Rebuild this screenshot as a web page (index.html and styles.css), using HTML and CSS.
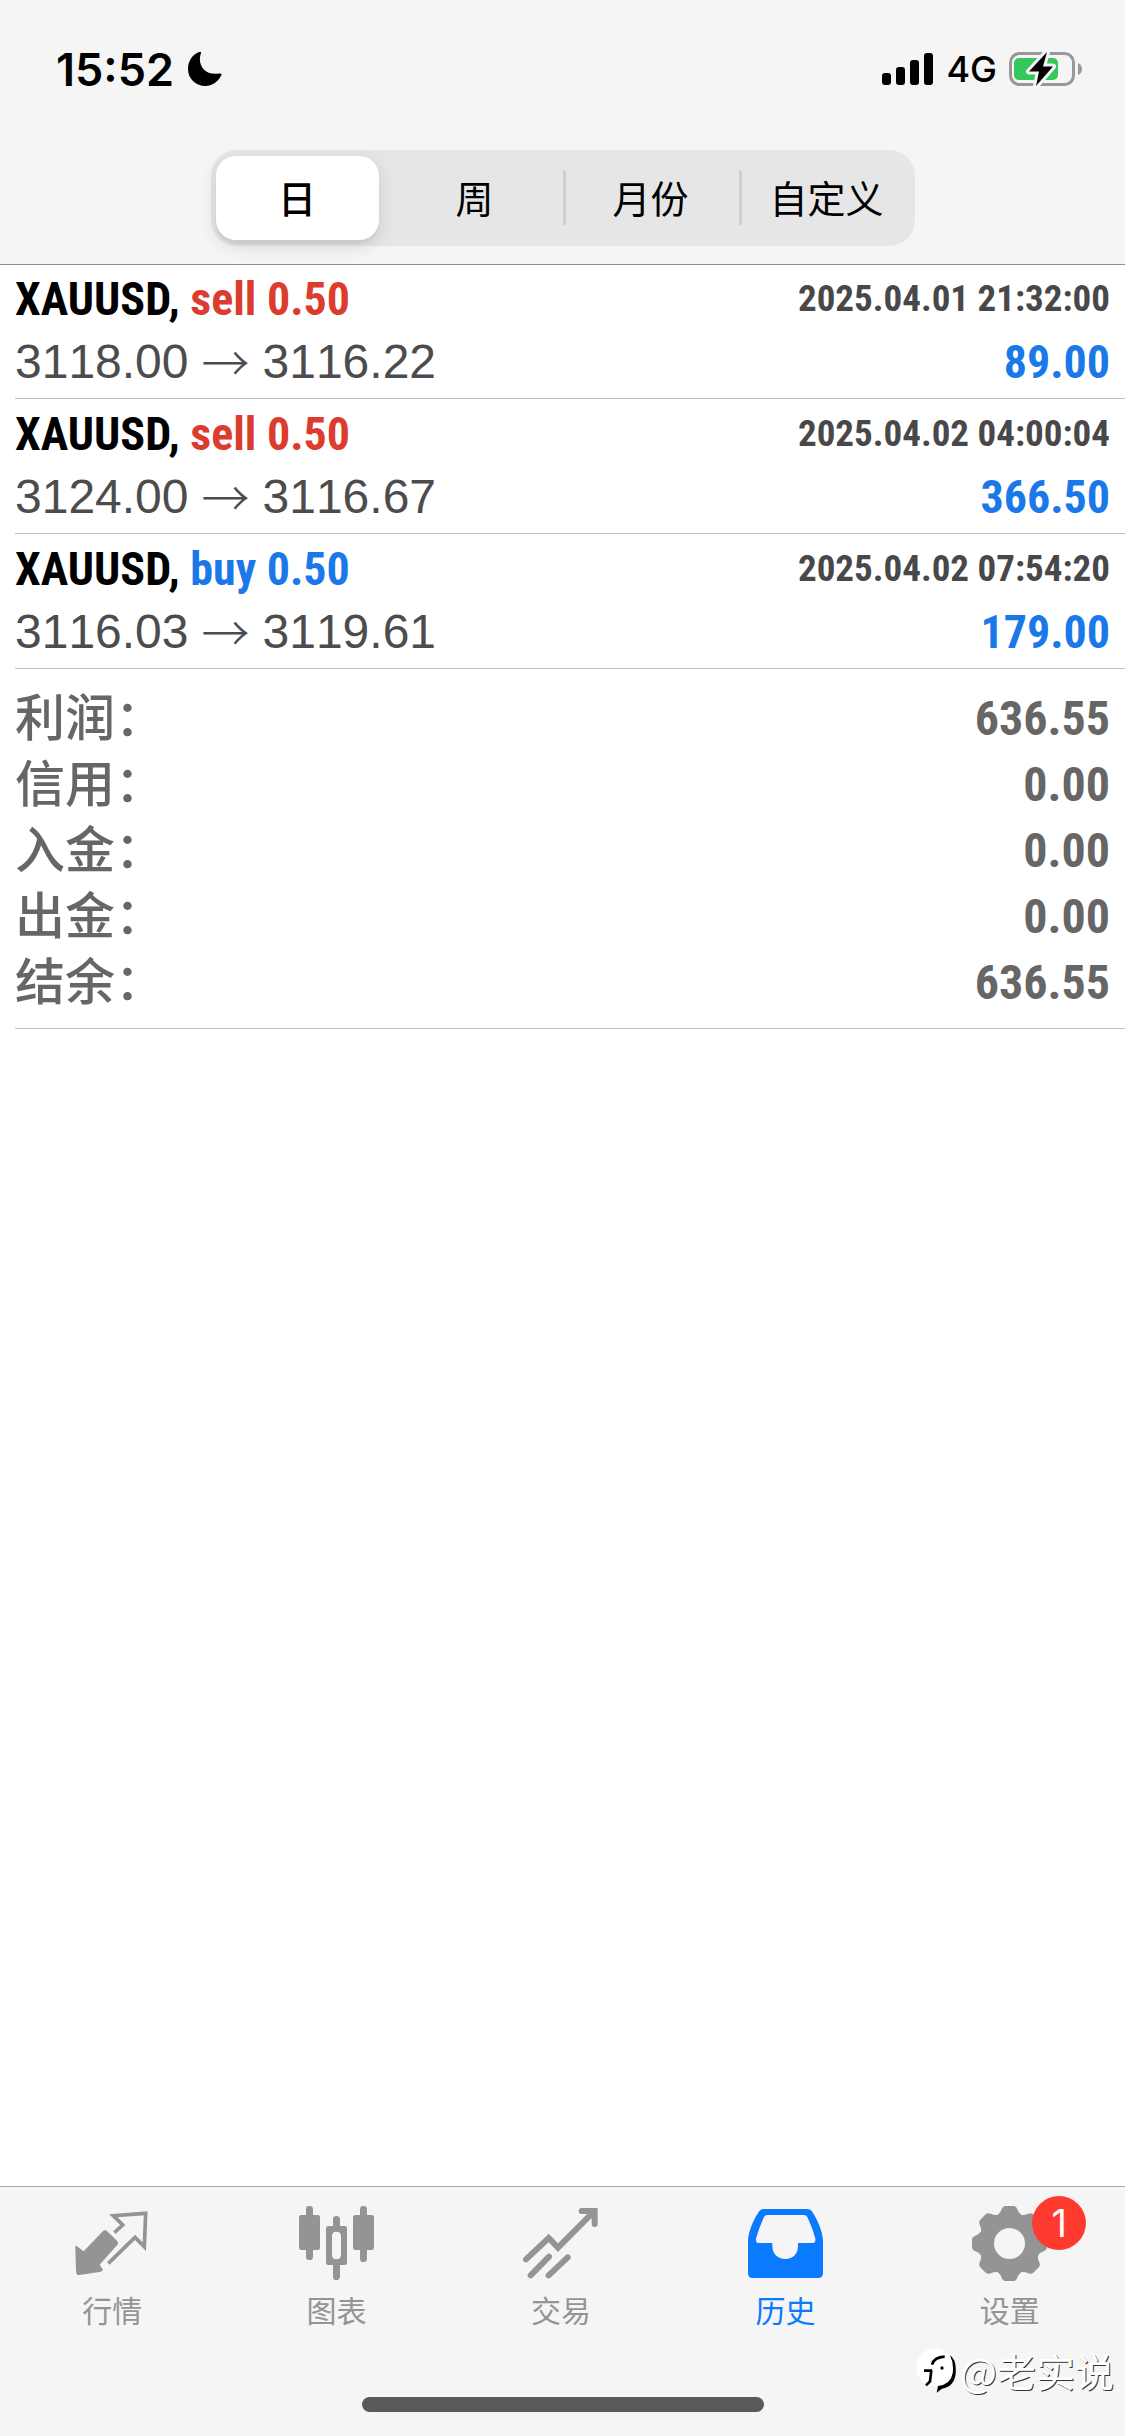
FILE: index.html
```
<!DOCTYPE html>
<html lang="zh-CN">
<head>
<meta charset="utf-8">
<meta name="viewport" content="width=device-width, initial-scale=1">
<title>历史</title>
<link rel="stylesheet" href="styles.css">
</head>
<body>
<header class="header">
  <div class="status">
    <div class="status-left">
      <span class="time">15:52</span>
      <svg class="moon" viewBox="0 0 34 34" aria-hidden="true"><path d="M13 1C9 12 16 24 31 21.500Q34 21 33.500 23C30 30 24 34 17.500 34C8 34 0 27 0 17C0 9 4 3 11 0Q13.500-1 13 1Z"/></svg>
    </div>
    <div class="status-right">
      <svg class="signal" viewBox="0 0 52 32" aria-hidden="true"><rect x="0" y="20" width="9" height="12" rx="3"/><rect x="14" y="14" width="9" height="18" rx="3"/><rect x="28" y="7" width="9" height="25" rx="3"/><rect x="42" y="0" width="9" height="32" rx="3"/></svg>
      <span class="network">4G</span>
      <svg class="battery" viewBox="0 0 74 36" aria-hidden="true">
        <rect x="1.500" y="2.500" width="63" height="31" rx="9" fill="none" stroke="#98989a" stroke-width="3"/>
        <path d="M69 12Q73 14 73 18T69 24Z" fill="#98989a"/>
        <rect x="5" y="7" width="44" height="22" rx="5" fill="#34c759"/>
        <path d="M38 1L20 20.500H30L27 35L44 15.500H34Z" fill="#000" stroke="#f5f5f5" stroke-width="6" stroke-linejoin="round" paint-order="stroke"/>
      </svg>
    </div>
  </div>
  <div class="segments" role="group" aria-label="时间范围">
    <button class="segment segment-active" type="button" aria-pressed="true">日</button>
    <button class="segment" type="button">周</button>
    <button class="segment segment-divided" type="button">月份</button>
    <button class="segment segment-divided" type="button">自定义</button>
  </div>
</header>

<main class="content">
  <ul class="deals">
    <li class="deal">
      <div class="line"><span class="symbol">XAUUSD, <span class="sell">sell 0.50</span></span><time class="date">2025.04.01 21:32:00</time></div>
      <div class="line"><span class="prices">3118.00 <span class="arrow">→</span> 3116.22</span><span class="profit">89.00</span></div>
    </li>
    <li class="deal">
      <div class="line"><span class="symbol">XAUUSD, <span class="sell">sell 0.50</span></span><time class="date">2025.04.02 04:00:04</time></div>
      <div class="line"><span class="prices">3124.00 <span class="arrow">→</span> 3116.67</span><span class="profit">366.50</span></div>
    </li>
    <li class="deal">
      <div class="line"><span class="symbol">XAUUSD, <span class="buy">buy 0.50</span></span><time class="date">2025.04.02 07:54:20</time></div>
      <div class="line"><span class="prices">3116.03 <span class="arrow">→</span> 3119.61</span><span class="profit">179.00</span></div>
    </li>
  </ul>
  <dl class="summary">
    <div class="total"><dt>利润：</dt><dd>636.55</dd></div>
    <div class="total"><dt>信用：</dt><dd>0.00</dd></div>
    <div class="total"><dt>入金：</dt><dd>0.00</dd></div>
    <div class="total"><dt>出金：</dt><dd>0.00</dd></div>
    <div class="total"><dt>结余：</dt><dd>636.55</dd></div>
  </dl>
</main>

<footer class="footer">
  <nav class="tabs">
    <a class="tab" href="#quotes">
      <svg class="icon" viewBox="0 0 225 225" aria-hidden="true"><path d="M5 120L26 136L82 77Q90 69 98 77L126 104Q132 111 126 118L74 176L83 190Q84 195 78 197L14 207Q4 208 3 197L1 124Q1 118 5 120Z" fill="currentColor"/><path d="M118 80L143 57L115 29L212 22L208 122L180 94L100 172" fill="none" stroke="currentColor" stroke-width="11"/></svg>
      <span>行情</span>
    </a>
    <a class="tab" href="#charts">
      <svg class="icon" viewBox="0 0 225 225" fill="currentColor" aria-hidden="true"><rect x="0" y="27" width="63" height="105" rx="7"/><rect x="21" y="0" width="21" height="162" rx="10"/><path fill-rule="evenodd" d="M88 60H137Q144 60 144 67V170Q144 177 137 177H88Q81 177 81 170V67Q81 60 88 60ZM112 77Q99 77 99 90V147Q99 160 112 160T126 147V90Q126 77 112 77Z"/><path d="M102 64V40Q102 30 112 30T123 40V64ZM102 173V212Q102 222 112 222T123 212V173Z"/><rect x="162" y="27" width="63" height="105" rx="7"/><rect x="183" y="0" width="21" height="168" rx="10"/></svg>
      <span>图表</span>
    </a>
    <a class="tab" href="#trade">
      <svg class="icon" viewBox="0 0 225 225" fill="none" stroke="currentColor" stroke-width="18" stroke-linecap="round" aria-hidden="true"><path d="M9 160L77 96L105 125L213 16M176 15H215V54"/><path d="M78 152L23 208M134 154L77 208"/></svg>
      <span>交易</span>
    </a>
    <a class="tab tab-active" href="#history" aria-current="page">
      <svg class="icon" viewBox="0 0 225 225" fill="currentColor" aria-hidden="true"><path fill-rule="evenodd" d="M47 9H178Q186 9 191 15C208 38 225 80 225 105V202Q225 216 211 216H14Q0 216 0 202V105C0 80 17 38 34 15Q39 9 47 9ZM58 27Q51 27 48 33C39 54 30 75 24 98Q22 111 33 111H73V120C73 144 90 159 112 159S150 144 150 120V111H193Q204 111 202 98C196 75 187 54 178 33Q175 27 168 27Z"/></svg>
      <span>历史</span>
    </a>
    <a class="tab" href="#settings">
      <span class="icon-wrap">
        <svg class="icon" viewBox="0 0 225 225" aria-hidden="true">
          <defs><path id="teeth" d="M76 28Q86 20 89 10Q93 0 101 0H124Q132 0 136 10Q139 20 149 28L140 60H85ZM76 197Q86 205 89 215Q93 225 101 225H124Q132 225 136 215Q139 205 149 197L140 165H85Z"/></defs>
          <g fill="currentColor"><use href="#teeth"/><use href="#teeth" transform="rotate(45 112.500 112.500)"/><use href="#teeth" transform="rotate(90 112.500 112.500)"/><use href="#teeth" transform="rotate(135 112.500 112.500)"/></g>
          <circle cx="112.500" cy="112.500" r="69" fill="none" stroke="currentColor" stroke-width="45"/>
        </svg>
        <span class="badge">1</span>
      </span>
      <span>设置</span>
    </a>
  </nav>
  <div class="home-indicator"></div>
  <div class="watermark">
    <svg class="mark" viewBox="0 0 120 135" aria-hidden="true"><circle cx="58" cy="58" r="57" fill="#fff"/><path d="M24 68H48M30 112L42 100L46 66M48 50Q54 28 86 26" fill="none" stroke="#000" stroke-width="8"/><path d="M102 22Q122 34 119 78Q114 116 78 122L62 134L66 114Q104 110 110 76Q114 46 102 22Z"/><circle cx="78" cy="60" r="5"/></svg>
    <span>@老实说</span>
  </div>
</footer>
</body>
</html>
```
FILE: styles.css
```
* {
  box-sizing: border-box;
}

body {
  display: flex;
  flex-direction: column;
  min-height: 100vh;
  margin: 0;
  background: #fff;
  color: #000;
  font-family: "Liberation Sans", "Noto Sans CJK SC", sans-serif;
}

.header {
  position: relative;
  padding-bottom: 18px;
  background: #f5f5f5;
  box-shadow: 0 1px 0 #8e8e90;
}

.status {
  display: flex;
  align-items: center;
  justify-content: space-between;
  height: 138px;
  padding: 0 42px 0 56px;
  font-family: Inter, sans-serif;
}

.status-left,
.status-right {
  display: flex;
  align-items: center;
}

.status-left {
  gap: 14px;
}

.status-right {
  gap: 12px;
}

.time {
  font-size: 45px;
  font-weight: 600;
}

.network {
  font-size: 36px;
  font-weight: 500;
}

.moon {
  width: 34px;
  height: 34px;
}

.signal {
  width: 52px;
  height: 32px;
}

.battery {
  width: 74px;
  height: 36px;
}

.segments {
  display: grid;
  grid-template-columns: repeat(4, 1fr);
  width: 704px;
  max-width: 94%;
  height: 96px;
  margin: 12px auto 0;
  border-radius: 26px;
  background: #e6e6e7;
}

.segment {
  padding: 0 0 4px;
  border: 0;
  background: none;
  color: #000;
  font-family: "Noto Sans CJK SC", sans-serif;
  font-size: 38px;
  font-weight: 400;
}

.segment-active {
  margin: 6px 8px 6px 5px;
  border-radius: 20px;
  background: #fff;
  box-shadow: 0 6px 18px rgba(0, 0, 0, .12), 0 4px 2px rgba(0, 0, 0, .04);
  font-weight: 500;
}

.segment-divided {
  background: linear-gradient(#cfcfd1, #cfcfd1) left center / 3px 54px no-repeat;
}

.content {
  flex: 1;
}

.deals,
.summary {
  margin: 0 0 0 15px;
  padding: 0;
  list-style: none;
}

.deal {
  padding: 3px 15px 5px 0;
  border-bottom: 1px solid #bfbfc1;
}

.line {
  display: flex;
  align-items: center;
  justify-content: space-between;
  height: 63px;
}

.symbol,
.date,
.profit,
.total dd {
  font-family: "Roboto Condensed", "Liberation Sans Narrow", sans-serif;
  font-weight: 700;
}

.symbol,
.profit {
  font-size: 46px;
}

.sell {
  color: #dc3c2e;
}

.buy,
.profit {
  color: #1a78e8;
}

.date {
  color: #48484a;
  font-size: 37px;
}

.prices {
  display: flex;
  align-items: center;
  gap: 13px;
  color: #4c4c4e;
  font-size: 48px;
  font-kerning: none;
}

.arrow {
  padding-bottom: 4px;
  font-family: "Noto Sans CJK SC", sans-serif;
  font-weight: 300;
  line-height: 56px;
}

.summary {
  padding: 15px 15px 14px 0;
  border-bottom: 1px solid #bfbfc1;
  color: #666;
}

.total {
  display: flex;
  align-items: center;
  justify-content: space-between;
  height: 66px;
}

.total dt {
  padding-bottom: 6px;
  font-family: "Noto Sans CJK SC", sans-serif;
  font-size: 50px;
  font-weight: 500;
  line-height: 60px;
}

.total dd {
  margin: 0;
  padding-top: 2px;
  font-size: 48px;
}

.footer {
  position: relative;
  padding-bottom: 24px;
  border-top: 1px solid #a9a9ab;
  background: #f5f5f5;
}

.tabs {
  display: grid;
  grid-template-columns: repeat(5, 1fr);
  height: 210px;
  margin-right: 3px;
}

.tab {
  display: flex;
  flex-direction: column;
  align-items: center;
  gap: 8px;
  padding-top: 19px;
  color: #949494;
  font-family: "Noto Sans CJK SC", sans-serif;
  font-size: 30px;
  line-height: 40px;
  text-decoration: none;
}

.tab-active {
  color: #0a7aff;
}

.icon {
  display: block;
  width: 75px;
  height: 75px;
}

.icon-wrap {
  position: relative;
}

.badge {
  position: absolute;
  top: -10px;
  left: 60px;
  width: 54px;
  height: 54px;
  border-radius: 50%;
  background: #ff3b30;
  color: #fff;
  font-family: Inter, sans-serif;
  font-size: 38px;
  line-height: 54px;
  text-align: center;
}

.home-indicator {
  width: 402px;
  max-width: 60%;
  height: 15px;
  margin: 0 auto;
  border-radius: 8px;
  background: #595959;
}

.watermark {
  position: absolute;
  right: 11px;
  bottom: 37px;
  display: flex;
  align-items: center;
  gap: 4px;
  color: #fff;
  font-family: "Noto Sans CJK SC", sans-serif;
  font-size: 39px;
  font-weight: 400;
  line-height: 58px;
  text-shadow: 1px 1px 0 #333;
}

.mark {
  width: 40px;
  height: 45px;
}
```
